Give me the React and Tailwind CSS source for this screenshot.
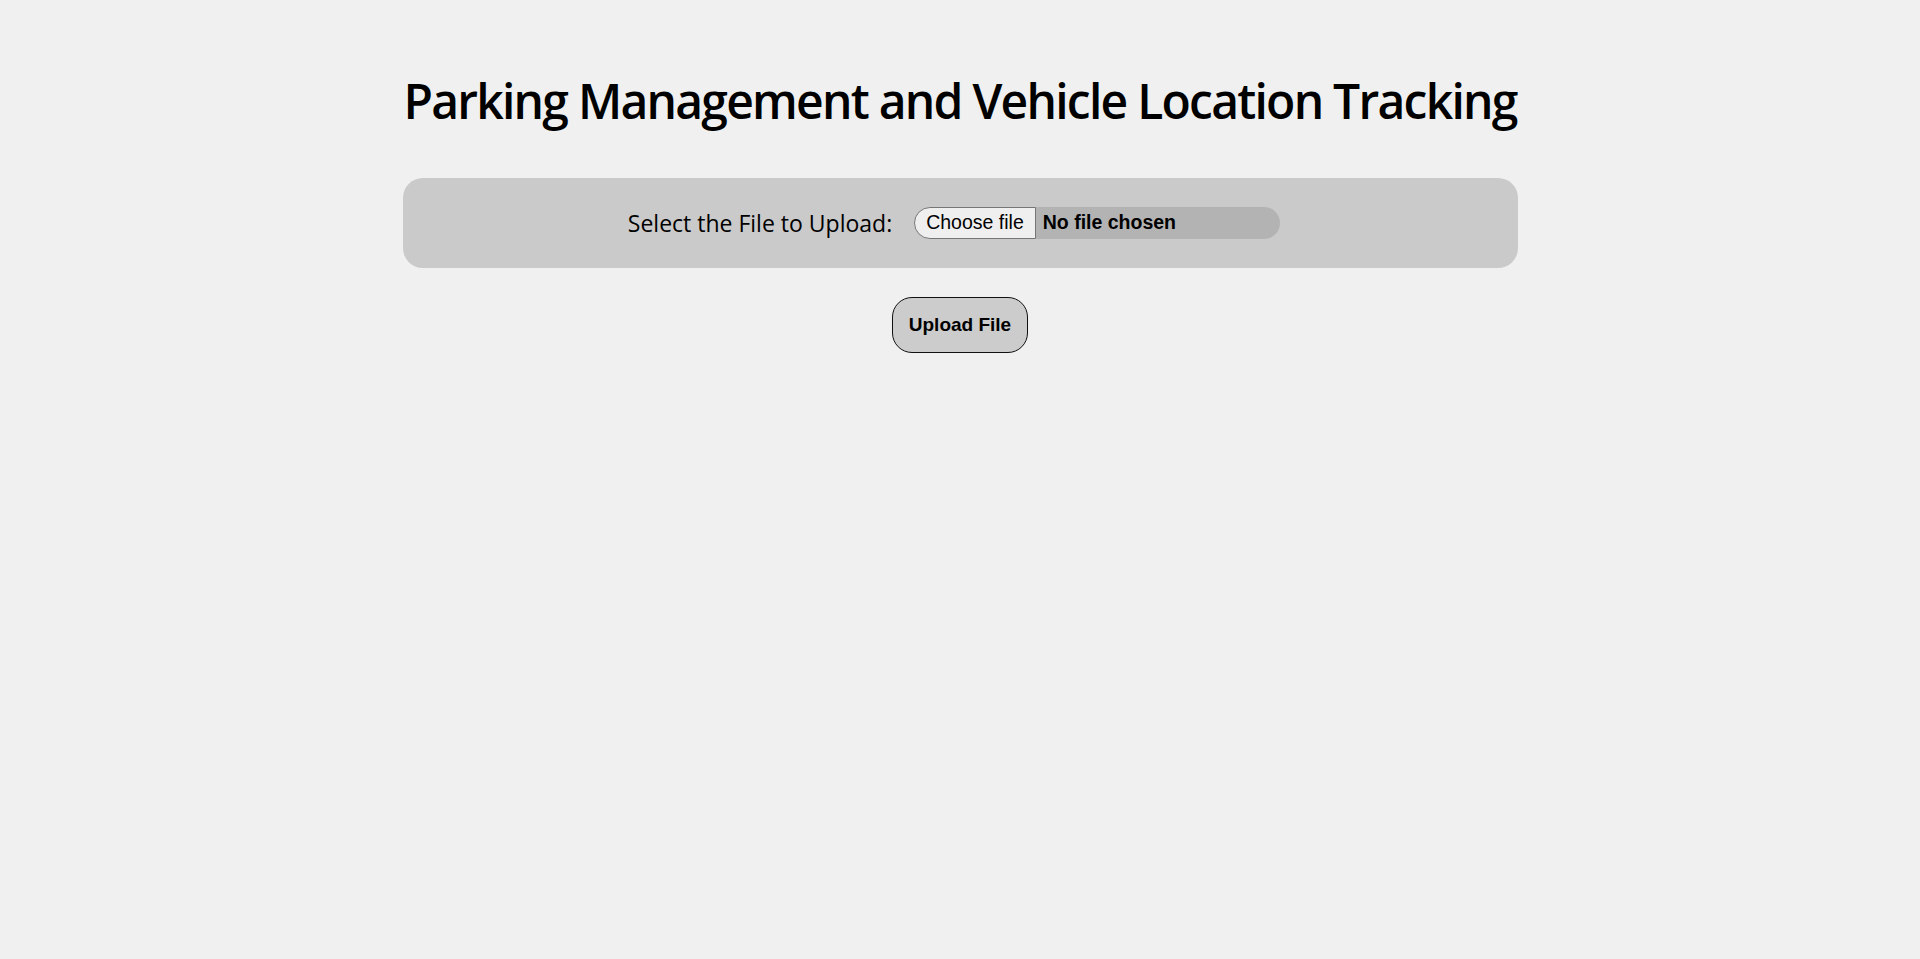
import { useRef, useState } from 'react';

export default function App() {
  const inputRef = useRef(null);
  const [fileName, setFileName] = useState('');

  return (
    <div className="min-h-screen bg-[#f0f0f0] flex flex-col items-center pt-[68px] font-['Open_Sans',sans-serif] text-black">
      <h1 className="text-[48px] leading-[65px] font-semibold tracking-[-1.75px]">
        Parking Management and Vehicle Location Tracking
      </h1>

      <div className="mt-[45px] w-[1115px] h-[90px] rounded-[20px] bg-[#cacaca] flex items-center justify-center gap-[22px] pr-[12px]">
        <label htmlFor="file" className="text-[23px] leading-none">
          Select the File to Upload:
        </label>
        <input
          id="file"
          ref={inputRef}
          type="file"
          className="hidden"
          onChange={(e) => setFileName(e.target.files[0]?.name || '')}
        />
        <div className="w-[366px] h-8 rounded-full bg-[#b3b3b3] overflow-hidden flex items-center font-['Liberation_Sans',Arial,sans-serif] text-[19.5px]">
          <button
            type="button"
            onClick={() => inputRef.current?.click()}
            className="h-8 px-[11px] bg-[#efefef] border border-[#767676] rounded-l-full font-normal"
          >
            Choose file
          </button>
          <span className="ml-[7px] font-bold truncate">{fileName || 'No file chosen'}</span>
        </div>
      </div>

      <button
        type="button"
        className="mt-[29px] w-[136px] h-[56px] rounded-[20px] border-[1.5px] border-[#111] bg-[#cccccc] font-['Liberation_Sans',Arial,sans-serif] text-[19px] font-bold"
      >
        Upload File
      </button>
    </div>
  );
}
